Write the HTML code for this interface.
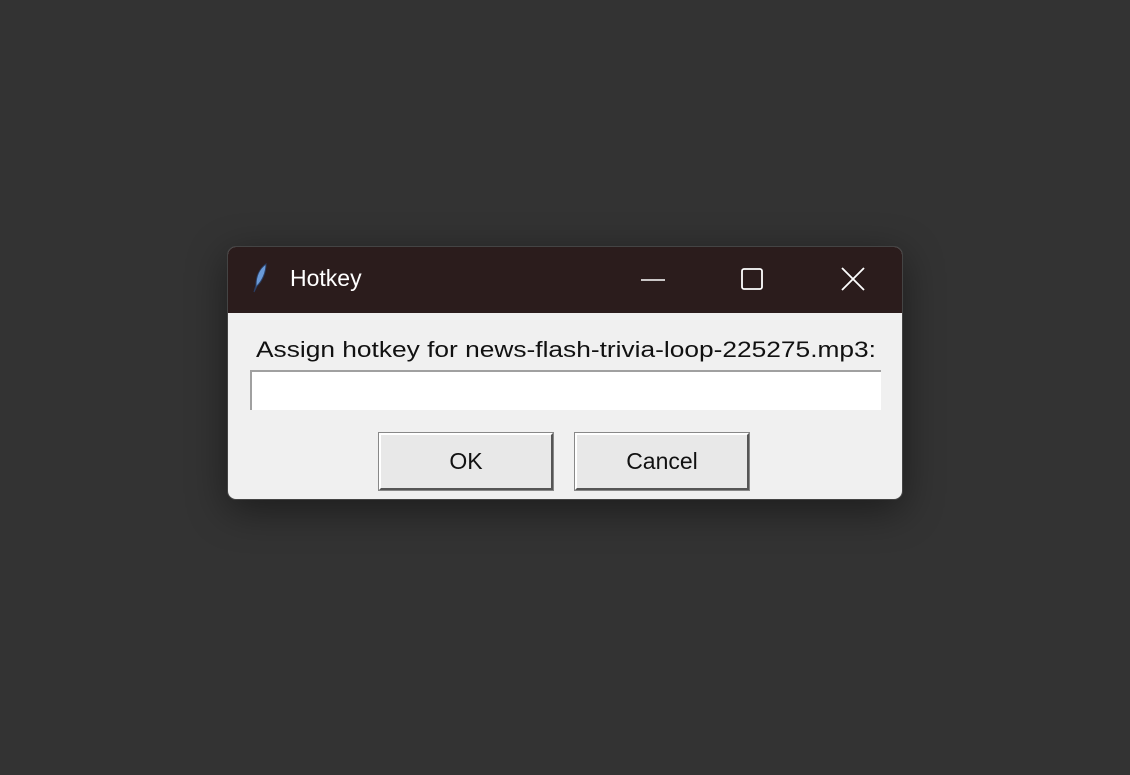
<!DOCTYPE html>
<html><head><style>
body{margin:0;width:1130px;height:775px;background:#333333;position:relative;overflow:hidden;font-family:"Liberation Sans",sans-serif;}
.win{position:absolute;left:227px;top:246px;width:676px;height:254px;border-radius:9px;background:#f0f0f0;overflow:hidden;box-shadow:0 10px 40px rgba(0,0,0,0.45);border:1px solid #444;box-sizing:border-box;}
.tb{position:absolute;left:0;top:0;width:100%;height:66px;background:#2b1c1c;}
.entry{position:absolute;left:22px;top:123px;width:631px;height:40px;background:#fff;border-top:2px solid #a0a0a0;border-left:2px solid #a0a0a0;box-sizing:border-box;}
.btn{position:absolute;top:186px;width:174px;height:57px;background:#e8e8e8;box-sizing:border-box;border:2px solid;border-color:#fff #555 #555 #fff;outline:1px solid #888;font-size:23px;color:#111;text-align:center;line-height:53px;}
</style></head><body>
<div class="win">
<div class="tb">
<svg style="position:absolute;left:22px;top:14px" width="22" height="34" viewBox="0 0 22 34"><path d="M16 3 C9 8 6 16 6 24 L4 31 L7 25 C12 20 16 12 16 3Z" fill="#6a9ad8" stroke="#2a3f66" stroke-width="1"/></svg>
<div style="position:absolute;left:62px;top:18px;font-size:23px;color:#fff;">Hotkey</div>
<svg style="position:absolute;left:412px;top:20px" width="26" height="26"><line x1="1" y1="13" x2="25" y2="13" stroke="#fff" stroke-width="1.6"/></svg>
<svg style="position:absolute;left:512px;top:20px" width="26" height="26"><rect x="2" y="2" width="20" height="20" rx="2" fill="none" stroke="#fff" stroke-width="1.8"/></svg>
<svg style="position:absolute;left:612px;top:19px" width="26" height="26"><path d="M2 2L24 24M24 2L2 24" stroke="#fff" stroke-width="1.8"/></svg>
</div>
<svg style="position:absolute;left:0;top:80px" width="676" height="40"><text x="28" y="30" font-family="Liberation Sans, sans-serif" font-size="22" fill="#111" textLength="620" lengthAdjust="spacingAndGlyphs">Assign hotkey for news-flash-trivia-loop-225275.mp3:</text></svg>
<div class="entry"></div>
<div class="btn" style="left:151px">OK</div>
<div class="btn" style="left:347px">Cancel</div>
</div>
</body></html>
